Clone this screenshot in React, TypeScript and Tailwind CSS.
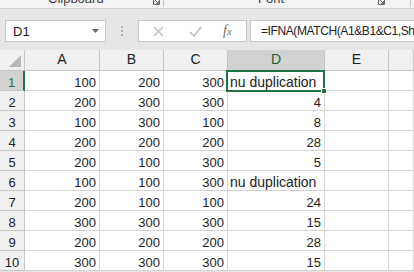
import React from 'react';

// Feuille de calcul : barre de formule + grille A1:E10
type Cell = number | string;

const rows: Cell[][] = [
  [100, 200, 300, 'nu duplication'],
  [200, 300, 300, 4],
  [100, 300, 100, 8],
  [200, 200, 200, 28],
  [200, 100, 300, 5],
  [100, 100, 300, 'nu duplication'],
  [200, 100, 100, 24],
  [300, 300, 300, 15],
  [200, 200, 200, 28],
  [300, 300, 300, 15],
];

const cols = ['A', 'B', 'C', 'D', 'E', ''];

const Launcher = () => (
  <svg width="7" height="7" viewBox="0 0 7 7" fill="none" stroke="#6b6b6b" strokeWidth="1">
    <path d="M0.5 6.5V0.5H6.5V6.5H0.5" />
    <path d="M2 2L5.5 5.5M5.5 3V5.5H3" />
  </svg>
);

const App: React.FC = () => {
  return (
    <div className="w-[414px] h-[272px] overflow-hidden bg-[#e6e6e6] font-['Liberation_Sans',Arial,sans-serif] text-[13px] text-[#222]">
      {/* Bas du ruban */}
      <div className="h-[9px] bg-[#f3f3f3] border-b border-[#d4d4d4] flex overflow-hidden text-[#444]">
        <div className="w-[163px] relative">
          <span className="absolute left-[48px] -top-[9px] text-[13px] leading-[15px]">Clipboard</span>
          <span className="absolute left-[153px] -top-[2px]"><Launcher /></span>
        </div>
        <div className="w-px h-[7px] bg-[#c8c8c8]" />
        <div className="flex-1 relative">
          <span className="absolute left-[94px] -top-[9px] text-[13px] leading-[15px]">Font</span>
          <span className="absolute left-[214px] -top-[2px]"><Launcher /></span>
          <span className="absolute left-[246px] top-0 w-px h-[7px] bg-[#c8c8c8]" />
        </div>
      </div>

      {/* Barre de formule */}
      <div className="h-[41px] flex items-start pt-[11px] pl-[5px]">
        <div className="w-[101px] h-[22px] bg-white border border-[#c6c6c6] flex items-center justify-between pl-[7px] pr-[6px]">
          <span className="leading-[15px] pt-[1px]">D1</span>
          <svg width="7" height="4" viewBox="0 0 7 4"><path d="M0 0H7L3.5 4Z" fill="#666" /></svg>
        </div>
        <div className="w-[32px] h-[22px] flex flex-col items-center justify-center gap-[2px]">
          <span className="w-[2px] h-[2px] bg-[#b4b4b4]" />
          <span className="w-[2px] h-[2px] bg-[#b4b4b4]" />
          <span className="w-[2px] h-[2px] bg-[#b4b4b4]" />
        </div>
        <div className="w-[109px] h-[22px] bg-white border border-[#c6c6c6] flex items-center">
          <svg className="ml-[14px]" width="11" height="11" viewBox="0 0 11 11" stroke="#bdbdbd" strokeWidth="1.4">
            <path d="M1 1L10 10M10 1L1 10" />
          </svg>
          <svg className="ml-[25px]" width="13" height="11" viewBox="0 0 13 11" fill="none" stroke="#bdbdbd" strokeWidth="1.6">
            <path d="M1 6L5 10L12 1" />
          </svg>
          <span className="ml-[21px] font-['Liberation_Serif',serif] italic text-[14px] text-[#6d6d6d] leading-none">
            f<span className="text-[11px]">x</span>
          </span>
        </div>
        <div className="ml-[3px] flex-1 h-[22px] bg-white border border-r-0 border-[#c6c6c6] flex items-center pl-[10px] overflow-hidden whitespace-nowrap">
          <span className="text-[12px] tracking-[-0.4px] leading-[15px] pt-[1px]">
            =IFNA(MATCH(A1&amp;B1&amp;C1,Sheet2!A:A&amp;Sheet2!B:B&amp;Sheet2!C:C,0),"nu duplication")
          </span>
        </div>
      </div>

      {/* Grille */}
      <div className="relative bg-white grid grid-cols-[25px_75px_64px_64px_97px_64px_25px] grid-rows-[21px_repeat(10,20px)]">
        {/* En-têtes de colonnes */}
        <div className="bg-[#f0f0f0] border-r border-b border-[#c6c6c6] relative">
          <svg className="absolute right-[3px] bottom-[3px]" width="12" height="12" viewBox="0 0 12 12">
            <path d="M12 0V12H0Z" fill="#b9b9b9" />
          </svg>
        </div>
        {cols.map((c, i) => (
          <div
            key={i}
            className={`border-r border-b border-[#c6c6c6] flex items-end justify-center text-[14px] leading-[15px] pb-[3px] ${
              c === 'D' ? 'bg-[#d2d2d2] text-[#1f5c3a]' : 'bg-[#f0f0f0] text-[#222]'
            }`}
          >
            {c}
          </div>
        ))}

        {rows.map((r, ri) => (
          <React.Fragment key={ri}>
            <div
              className={`border-b border-r border-[#c6c6c6] flex items-end justify-center leading-[15px] ${
                ri === 0 ? 'bg-[#d2d2d2] text-[#217346] border-r-2 border-r-[#217346]' : 'bg-[#f0f0f0] text-[#222]'
              }`}
            >
              {ri + 1}
            </div>
            {[...r, '', ''].map((v, ci) => (
              <div
                key={ci}
                className={`border-r border-b border-[#d4d4d4] flex items-end leading-[15px] whitespace-nowrap ${
                  typeof v === 'number' ? 'justify-end pr-[3px]' : 'justify-start pl-[2px] text-[14px]'
                }`}
              >
                {v}
              </div>
            ))}
          </React.Fragment>
        ))}

        {/* Cellule active D1 */}
        <div className="absolute left-[226px] top-[20px] w-[99px] h-[22px] border-2 border-[#217346] pointer-events-none">
          <div className="absolute -right-[4px] -bottom-[4px] w-[6px] h-[6px] bg-[#217346] border border-white" />
        </div>
      </div>
    </div>
  );
};

export default App;
